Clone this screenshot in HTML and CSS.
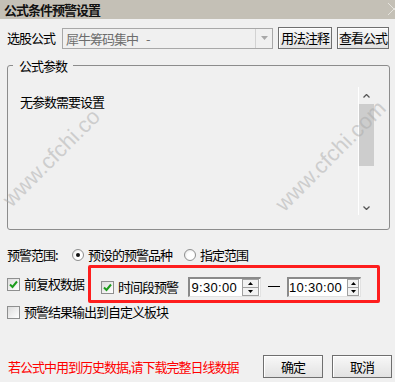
FILE: index.html
```html
<!DOCTYPE html>
<html>
<head>
    <title>公式条件预警设置</title>
    <link rel="stylesheet" href="styles.css">
</head>
<body>
    <div class="titlebar">
        <span class="title">公式条件预警设置</span>
        <svg class="close" width="14" height="14" viewBox="0 0 14 14">
            <path d="M1 1 L13 13 M13 1 L1 13" stroke="#e4e2dc" stroke-width="1" fill="none"/>
        </svg>
    </div>

    <div class="content">
        <div class="formula-row">
            <span class="label">选股公式</span>
            <div class="combo">
                <span class="combo-text">犀牛筹码集中<span class="combo-dash">-</span></span>
                <span class="combo-arrow">
                    <svg width="7" height="4" viewBox="0 0 7 4"><path d="M0 0 L7 0 L3.5 4 Z" fill="#a8a8a8"/></svg>
                </span>
            </div>
            <button class="btn btn-note">用法注释</button>
            <button class="btn btn-view">查看公式</button>
        </div>

        <fieldset class="params">
            <legend>公式参数</legend>
            <div class="params-inner">
                <p class="no-params">无参数需要设置</p>
                <div class="scrollbar">
                    <span class="scroll-btn">
                        <svg width="7" height="4" viewBox="0 0 7 4"><path d="M0.5 3.5 L3.5 0.5 L6.5 3.5" stroke="#555" stroke-width="1.3" fill="none"/></svg>
                    </span>
                    <span class="thumb"></span>
                    <span class="track"></span>
                    <span class="scroll-btn scroll-down">
                        <svg width="7" height="4" viewBox="0 0 7 4"><path d="M0.5 0.5 L3.5 3.5 L6.5 0.5" stroke="#555" stroke-width="1.3" fill="none"/></svg>
                    </span>
                </div>
            </div>
        </fieldset>

        <div class="range-row">
            <span class="range-label">预警范围:</span>
            <label class="radio-option">
                <span class="radio checked"></span>
                <span>预设的预警品种</span>
            </label>
            <label class="radio-option second">
                <span class="radio"></span>
                <span>指定范围</span>
            </label>
        </div>

        <div class="options-row">
            <label class="check-option">
                <span class="checkbox">
                    <svg width="11" height="11" viewBox="0 0 11 11"><path d="M2 5.5 L4.5 8 L9 2.5" stroke="#1c9c1c" stroke-width="2" fill="none"/></svg>
                </span>
                <span>前复权数据</span>
            </label>
            <div class="red-box">
                <label class="check-option">
                    <span class="checkbox">
                        <svg width="11" height="11" viewBox="0 0 11 11"><path d="M2 5.5 L4.5 8 L9 2.5" stroke="#1c9c1c" stroke-width="2" fill="none"/></svg>
                    </span>
                    <span>时间段预警</span>
                </label>
                <div class="spin spin-start">
                    <span class="spin-value">9:30:00</span>
                    <span class="spin-buttons">
                        <span class="spin-btn"><svg width="5" height="3" viewBox="0 0 5 3"><path d="M0 3 L5 3 L2.5 0 Z" fill="#000"/></svg></span>
                        <span class="spin-btn"><svg width="5" height="3" viewBox="0 0 5 3"><path d="M0 0 L5 0 L2.5 3 Z" fill="#000"/></svg></span>
                    </span>
                </div>
                <span class="dash"></span>
                <div class="spin spin-end">
                    <span class="spin-value">10:30:00</span>
                    <span class="spin-buttons">
                        <span class="spin-btn"><svg width="5" height="3" viewBox="0 0 5 3"><path d="M0 3 L5 3 L2.5 0 Z" fill="#000"/></svg></span>
                        <span class="spin-btn"><svg width="5" height="3" viewBox="0 0 5 3"><path d="M0 0 L5 0 L2.5 3 Z" fill="#000"/></svg></span>
                    </span>
                </div>
            </div>
        </div>

        <div class="output-row">
            <label class="check-option">
                <span class="checkbox"></span>
                <span>预警结果输出到自定义板块</span>
            </label>
        </div>

        <div class="footer-row">
            <span class="warning">若公式中用到历史数据,请下载完整日线数据</span>
            <div class="footer-buttons">
                <button class="btn btn-footer">确定</button>
                <button class="btn btn-footer">取消</button>
            </div>
        </div>
    </div>

    <span class="watermark wm-left">www.cfchi.co</span>
    <span class="watermark wm-right">www.cfchi.com</span>
</body>
</html>
```

FILE: styles.css
```css
* {
    box-sizing: border-box;
}
body {
    margin: 0;
    width: 395px;
    height: 382px;
    overflow: hidden;
    position: relative;
    background-color: #f0f0f0;
    font-family: "Noto Sans CJK SC", "Liberation Sans", sans-serif;
    font-size: 13px;
    letter-spacing: -1px;
    line-height: 16px;
    color: #000;
}
.titlebar {
    height: 19px;
    background-color: #c4c0b6;
    display: flex;
    align-items: center;
    justify-content: space-between;
    padding-left: 4px;
}
.title {
    font-weight: bold;
    color: #111;
}
.close {
    margin-right: -6px;
    margin-top: -2px;
}
.content {
    padding: 0 5px 0 7px;
}
.formula-row {
    display: flex;
    align-items: center;
    height: 22px;
    margin-top: 8px;
}
.formula-row .label {
    width: 55px;
}
.combo {
    width: 211px;
    height: 21px;
    border: 1px solid #a8a8a8;
    display: flex;
    margin-right: 5px;
}
.combo-text {
    flex: 1;
    padding-left: 3px;
    color: #6d6d6d;
    line-height: 19px;
}
.combo-dash {
    margin-left: 8px;
}
.combo-arrow {
    width: 17px;
    border-left: 1px solid #d2d2d2;
    display: flex;
    align-items: center;
    justify-content: center;
}
.btn {
    height: 22px;
    padding: 0;
    border: 1px solid #6f6f6f;
    background: linear-gradient(#f8f8f8, #e2e2e2);
    box-shadow: inset 1px 1px #fff;
    font: inherit;
    letter-spacing: -1px;
    color: #000;
}
.btn-note {
    width: 54px;
    margin-right: 5px;
}
.btn-view {
    width: 52px;
}
.params {
    margin: 9px 0 0 0;
    padding: 14px 15px 14px 12px;
    border: 1px solid #8c8c8c;
    border-radius: 3px;
    min-width: 0;
}
.params legend {
    padding: 0 6px;
    margin-left: -7px;
    line-height: 15px;
}
.params-inner {
    display: flex;
    justify-content: space-between;
    height: 128px;
}
.no-params {
    margin: 0;
    padding-top: 7px;
    line-height: 15px;
}
.scrollbar {
    width: 16px;
    border-left: 1px solid #fff;
    display: flex;
    flex-direction: column;
}
.scroll-btn {
    height: 17px;
    display: flex;
    align-items: center;
    justify-content: center;
}
.scroll-down {
    padding-top: 2px;
}
.thumb {
    height: 62px;
    background-color: #cdcdcd;
}
.track {
    flex: 1;
}
.range-row {
    display: flex;
    align-items: center;
    height: 16px;
    margin-top: 17px;
}
.range-label {
    width: 65px;
}
.radio-option {
    display: inline-flex;
    align-items: center;
    gap: 4px;
}
.radio-option.second {
    margin-left: 12px;
}
.radio {
    width: 12px;
    height: 12px;
    border-radius: 50%;
    border: 1px solid #8e8f8f;
    background: radial-gradient(circle at 60% 60%, #fff 40%, #dedede);
    display: flex;
    align-items: center;
    justify-content: center;
}
.radio.checked::after {
    content: "";
    width: 4px;
    height: 4px;
    border-radius: 50%;
    background-color: #111;
}
.options-row {
    display: flex;
    align-items: center;
    height: 38px;
    margin-top: 2px;
}
.check-option {
    display: inline-flex;
    align-items: center;
    gap: 4px;
}
.checkbox {
    width: 13px;
    height: 13px;
    border: 1px solid #8e8f8f;
    background: linear-gradient(135deg, #dcdcdc, #fff);
    display: flex;
    align-items: center;
    justify-content: center;
}
.red-box {
    margin-left: 4px;
    width: 292px;
    height: 38px;
    border: 3px solid #fe1e1e;
    border-radius: 2px;
    display: flex;
    align-items: center;
    padding: 6px 0 0 10px;
}
.spin {
    display: flex;
    align-items: center;
    height: 20px;
    background: #fff;
    border-top: 2px solid #8a8a8a;
    border-left: 2px solid #8a8a8a;
    border-right: 1px solid #e2e2e2;
    border-bottom: 1px solid #e2e2e2;
}
.spin-start {
    width: 73px;
    margin-left: 10px;
}
.spin-end {
    width: 74px;
}
.spin-value {
    flex: 1;
    text-align: right;
    padding-right: 5px;
    font-family: "Liberation Sans", Arial, sans-serif;
    letter-spacing: 0.3px;
    font-size: 13px;
}
.spin-buttons {
    width: 17px;
    height: 17px;
    display: flex;
    flex-direction: column;
    margin-right: 1px;
}
.spin-btn {
    flex: 1;
    border: 1px solid #a0a0a0;
    background: #f2f2f2;
    display: flex;
    align-items: center;
    justify-content: center;
}
.spin-btn + .spin-btn {
    border-top: none;
}
.dash {
    width: 12px;
    height: 1px;
    background-color: #000;
    margin: 0 7px;
    margin-top: -2px;
}
.output-row {
    display: flex;
    align-items: center;
    height: 16px;
    margin-top: 1px;
}
.footer-row {
    display: flex;
    align-items: center;
    height: 23px;
    margin-top: 35px;
}
.warning {
    color: #ff0000;
    padding-left: 1px;
}
.footer-buttons {
    margin-left: auto;
    margin-right: -2px;
    display: flex;
    gap: 9px;
}
.btn-footer {
    width: 60px;
    height: 23px;
}
.watermark {
    position: absolute;
    line-height: 24px;
    white-space: nowrap;
    font-family: "Liberation Sans", Arial, sans-serif;
    font-size: 22px;
    letter-spacing: 0;
    color: rgba(170, 170, 170, 0.5);
    transform: rotate(-45deg);
    pointer-events: none;
}
.wm-left {
    left: -12px;
    top: 146px;
}
.wm-right {
    left: 258px;
    top: 144px;
}
```
